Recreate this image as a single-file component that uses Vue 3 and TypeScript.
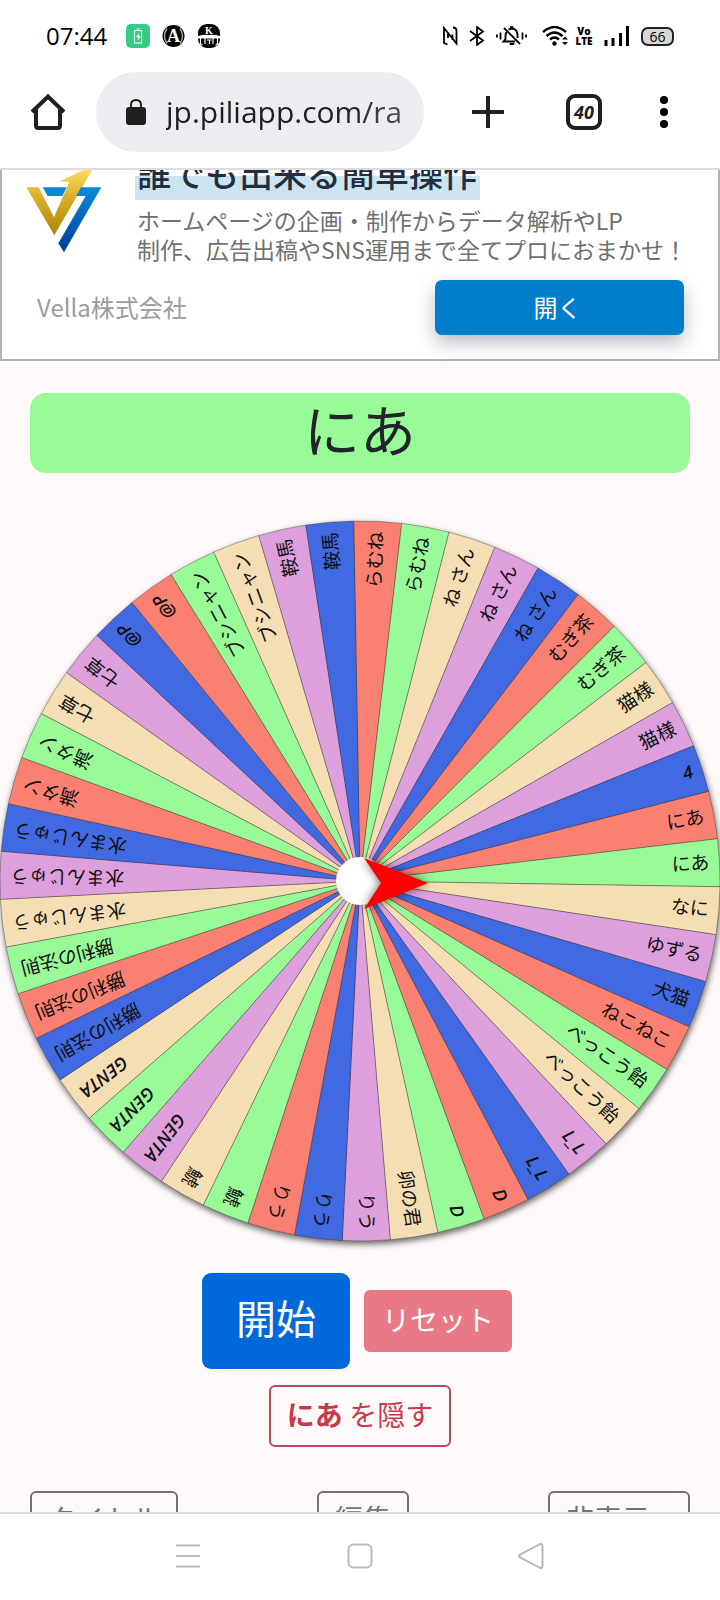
<script setup lang="ts">
import { ref } from 'vue'

interface Entry {
  name: string
  color: string
}

const SALMON = '#fa8072'
const GREEN = '#98fb98'
const WHEAT = '#f5deb3'
const PLUM = '#dda0dd'
const BLUE = '#4169e1'
const PALETTE = [SALMON, GREEN, WHEAT, PLUM, BLUE]

const groups: [string, number][] = [
  ['らむね', 2], ['ね さん', 3], ['むぎ茶', 2], ['猫様', 2], ['4', 1],
  ['にあ', 2], ['なに', 1], ['ゆずる', 1], ['犬猫', 1], ['ねこねこ', 1],
  ['べっこう飴', 2], ['L_L', 2], ['D', 2], ['卵の君', 1], ['りう', 3],
  ['鯱', 2], ['GENTA', 3], ['勝利の法則', 3], ['水まんじゅう', 3],
  ['満タン', 2], ['七草', 2], ['@P', 2], ['ブシニャン', 2], ['鞍馬', 2],
]

const names = groups.flatMap(([name, n]) => Array.from({ length: n }, () => name))

const entries: Entry[] = names.map((name, i) => {
  const slot = i < 29 ? i : i < 31 ? i - 28 : i + 3
  return { name, color: PALETTE[slot % 5] }
})

const START = -1
const STEP = 360 / entries.length
const R = 360

function point(deg: number): string {
  const a = ((deg - 90) * Math.PI) / 180
  return `${(R * Math.cos(a)).toFixed(2)} ${(R * Math.sin(a)).toFixed(2)}`
}

const slices = entries.map((e, i) => {
  const from = START + i * STEP
  return {
    ...e,
    path: `M0 0L${point(from)}A${R} ${R} 0 0 1 ${point(from + STEP)}Z`,
    turn: `rotate(${(from + STEP / 2 - 90).toFixed(3)})`,
    latin: /^[\x20-\x7e]+$/.test(e.name),
  }
})

const winner = ref('にあ')
const address = ref('jp.piliapp.com/ra')
</script>

<template>
  <div class="phone">
    <header class="status">
      <span class="time">07:44</span>
      <svg class="app-a" width="24" height="24" viewBox="0 0 24 24">
        <rect width="24" height="24" rx="5" fill="#35cb84" />
        <path d="M8.500 6.500h7v12.500h-7zM10.500 5h3" fill="none" stroke="#fff" stroke-width="1.100" />
        <path d="M12.800 9l-2.800 4h1.800v3.500l2.700-4.200h-1.700z" fill="#fff" />
      </svg>
      <svg class="app-b" width="23" height="24" viewBox="0 0 23 24">
        <circle cx="11.500" cy="12" r="11" fill="#000" />
        <path d="M5 4.500Q0 12 5 19.500M18 4.500Q23 12 18 19.500" fill="none" stroke="#aaa" stroke-width="1.400" />
        <text x="11.500" y="18" text-anchor="middle" class="glyph-a">A</text>
      </svg>
      <svg class="app-c" width="24" height="24" viewBox="0 0 24 24">
        <rect x="1" width="22" height="24" rx="9" fill="#000" />
        <path d="M0 12.500Q5 10 12 11Q19 10 24 12.500V14.500H0z" fill="#fff" />
        <path d="M3.500 14v5q0 2 2 2M8 14v6M16 14v6M20.500 14v5q0 2-2 2M10 16h4.500M12.500 16v4" fill="none" stroke="#fff" stroke-width="1.200" />
        <text x="12" y="10" text-anchor="middle" class="glyph-k">K</text>
      </svg>
      <span class="spacer"></span>
      <svg class="nfc" width="15" height="20" viewBox="0 0 15 20">
        <path d="M4.500 18.500L1 17V2L13.500 17.500V4.500Q13.500 1.500 10 1.500M5 12V7M9.500 8.500V14" fill="none" stroke="#000" stroke-width="1.800" />
      </svg>
      <svg class="bt" width="16" height="20" viewBox="0 0 16 20">
        <path d="M1 5L14 14.500L8 19V1L14 5.500L1 15" fill="none" stroke="#000" stroke-width="1.800" />
      </svg>
      <svg class="bell" width="32" height="20" viewBox="0 0 32 20">
        <path d="M8 2L24 18M11 5.500Q9.500 7 9.500 10V13L7.500 15.500H19M12.500 3.500Q20.500 .5 21.500 8.500V12M14 1.200h3.500" fill="none" stroke="#000" stroke-width="1.900" />
        <path d="M14 17.500h4v1h-4z" stroke="#000" />
        <path d="M1 8.500v3M4.500 6.500v7M26.500 6.500v7M30 8.500v3" stroke="#000" stroke-width="1.800" />
      </svg>
      <svg class="wifi" width="27" height="20" viewBox="0 0 27 20">
        <path d="M1 6Q12.500-4 24 6M4.500 10Q12.500 3 20.500 10M8 13.500Q12.500 9.500 17 13.500" fill="none" stroke="#000" stroke-width="2.400" />
        <circle cx="12.500" cy="17.500" r="2.200" />
        <path d="M20 13.500l3-3 3 3zM20 16l3 3 3-3z" />
      </svg>
      <span class="volte"><b>Vo</b><b>LTE</b></span>
      <svg class="signal" width="26" height="20" viewBox="0 0 26 20">
        <path d="M2 14v6M9 12v8M16.500 7v13M23.500 0v20" stroke="#000" stroke-width="3" />
      </svg>
      <span class="battery">66</span>
    </header>

    <nav class="toolbar">
      <button class="icon" aria-label="Home">
        <svg width="36" height="36" viewBox="0 0 36 36">
          <path d="M2 18L18 2.500L34 18M6 15.500V31.500Q6 34 8.500 34H27.500Q30 34 30 31.500V15.500" fill="none" stroke="#1f1f1f" stroke-width="4" />
        </svg>
      </button>
      <label class="omnibox">
        <svg width="20" height="26" viewBox="0 0 20 26">
          <rect y="8" width="20" height="18" rx="3" fill="#1f1f1f" />
          <path d="M5 9V6Q5 1 10 1Q15 1 15 6V9" fill="none" stroke="#1f1f1f" stroke-width="2" />
        </svg>
        <input v-model="address" type="text" aria-label="URL" />
      </label>
      <button class="icon plus" aria-label="New tab">
        <svg width="32" height="32" viewBox="0 0 32 32">
          <path d="M16 0V32M0 16H32" stroke="#1f1f1f" stroke-width="4" />
        </svg>
      </button>
      <button class="tabs">40</button>
      <button class="icon" aria-label="Menu">
        <svg width="8" height="32" viewBox="0 0 8 32">
          <circle cx="4" cy="4" r="4" /><circle cx="4" cy="16" r="4" /><circle cx="4" cy="28" r="4" />
        </svg>
      </button>
    </nav>

    <main class="view">
      <section class="ad">
        <div class="ad-top">
          <svg class="logo" width="77" height="83" viewBox="75 30 231 249">
            <defs>
              <linearGradient id="gold" x1="0" y1="0" x2="0" y2="1">
                <stop offset="0" stop-color="#ffdc5c" />
                <stop offset="0.400" stop-color="#d9b02c" />
                <stop offset="1" stop-color="#a88600" />
              </linearGradient>
              <linearGradient id="azure" x1="0" y1="0" x2="0" y2="1">
                <stop offset="0" stop-color="#0b8bdc" />
                <stop offset="1" stop-color="#003c94" />
              </linearGradient>
            </defs>
            <path d="M128 82H200L187 108H143Z" fill="#0b86d4" />
            <path d="M79 82H116L162 172L208 66L180 64L250 30H276L163 226Z" fill="url(#gold)" />
            <path d="M243 82H304L192 277L175 250L257 108H229Z" fill="url(#azure)" />
          </svg>
          <div class="copy">
            <div class="headline"><h2>誰でも出来る簡単操作</h2></div>
            <p>ホームページの企画・制作からデータ解析やLP<br />制作、広告出稿やSNS運用まで全てプロにおまかせ！</p>
          </div>
        </div>
        <div class="ad-bottom">
          <span class="brand">Vella株式会社</span>
          <button class="open">開く</button>
        </div>
      </section>

      <h1 class="result">{{ winner }}</h1>

      <svg class="wheel" viewBox="-360 -360 720 720">
        <g class="disc">
          <path v-for="(s, i) in slices" :key="i" :d="s.path" :fill="s.color" class="slice" />
        </g>
        <text
          v-for="(s, i) in slices"
          :key="'t' + i"
          :transform="s.turn"
          x="350"
          y="6"
          text-anchor="end"
          :class="['name', { latin: s.latin }]"
        >{{ s.name }}</text>
        <circle r="24" fill="#fff" />
        <path d="M4 -23L68 2L4 28L21 2Z" class="pointer" />
      </svg>

      <div class="actions">
        <button class="start">開始</button>
        <button class="reset">リセット</button>
      </div>
      <div class="actions second">
        <button class="hide"><b>{{ winner }}</b> を隠す</button>
      </div>
      <div class="tools">
        <button>タイトル</button>
        <button>編集</button>
        <button>非表示<i class="caret"></i></button>
      </div>
    </main>

    <footer class="sysnav">
      <button class="icon" aria-label="Recents">
        <svg width="26" height="26" viewBox="0 0 26 26"><path d="M1 2.500H25M1 13H25M1 23.500H25" /></svg>
      </button>
      <button class="icon" aria-label="Home screen">
        <svg width="26" height="26" viewBox="0 0 26 26"><rect x="1.500" y="1.500" width="23" height="23" rx="5" /></svg>
      </button>
      <button class="icon" aria-label="Back">
        <svg width="26" height="26" viewBox="0 0 26 26"><path d="M22 1.200L2 11.500Q0 13 2 14.500L22 24.800Q24.500 25.500 24.500 23V3Q24.500 .5 22 1.200Z" /></svg>
      </button>
    </footer>
  </div>
</template>

<style>
body {
  margin: 0;
  background: #fff;
}
</style>

<style scoped>
.phone {
  display: flex;
  flex-direction: column;
  height: 100vh;
  overflow: hidden;
  background: #fff;
  color: #212529;
  font-family: "Noto Sans CJK JP", "Noto Sans", sans-serif;
}
button {
  margin: 0;
  font-family: inherit;
  font-weight: 400;
  cursor: pointer;
}
.icon {
  display: flex;
  padding: 0;
  border: 0;
  background: none;
}
.status {
  flex: none;
  display: flex;
  align-items: center;
  height: 72px;
  padding: 0 46px;
  color: #000;
}
.time {
  width: 80px;
  font: 400 24px/32px "Open Sans", sans-serif;
}
.app-b { margin-left: 12px; }
.app-c { margin-left: 12px; }
.glyph-a {
  font: 700 18px "Liberation Serif", serif;
  fill: #fff;
}
.glyph-k {
  font: 700 10px "Liberation Serif", serif;
  fill: #fff;
}
.spacer { flex: 1; }
.bt { margin-left: 11px; }
.bell { margin-left: 11px; }
.wifi { margin-left: 14px; }
.volte {
  display: flex;
  flex-direction: column;
  align-items: center;
  width: 18px;
  margin-left: 6px;
  font: 700 10px/10px "Open Sans", sans-serif;
}
.signal { margin-left: 11px; }
.battery {
  box-sizing: border-box;
  width: 33px;
  height: 19px;
  margin-left: 11px;
  border: 2px solid #222;
  border-radius: 7px;
  background: #d8d8d8;
  font: 400 14px/15px "Open Sans", sans-serif;
  text-align: center;
}
.toolbar {
  flex: none;
  display: flex;
  align-items: center;
  height: 80px;
  padding: 0 52px 16px 30px;
  border-bottom: 2px solid #dcdcdc;
}
.omnibox {
  flex: 1;
  display: flex;
  align-items: center;
  gap: 20px;
  min-width: 0;
  height: 80px;
  margin: 0 48px 0 30px;
  padding: 0 14px 0 30px;
  border-radius: 40px;
  background: #ecedf1;
}
.omnibox svg { flex: none; }
.omnibox input {
  flex: 1;
  min-width: 0;
  padding: 0;
  border: 0;
  outline: 0;
  background: none;
  color: #1f1f1f;
  font: 500 30px/40px "Open Sans", sans-serif;
  mask-image: linear-gradient(90deg, #000 75%, rgba(0, 0, 0, 0.700));
}
.plus { margin-right: 62px; }
.tabs {
  box-sizing: border-box;
  width: 36px;
  height: 36px;
  margin-right: 58px;
  padding: 0;
  border: 4px solid #1f1f1f;
  border-radius: 9px;
  background: #fff;
  color: #1f1f1f;
  font: italic 700 18px/28px "Open Sans", sans-serif;
}
.view {
  flex: 1;
  min-height: 0;
  overflow: hidden;
  background: #fff9f9;
}
.ad {
  border: 2px solid #b4b4b4;
  border-top: 0;
  background: #fff;
}
.ad-top {
  display: flex;
  align-items: flex-start;
  padding: 0 0 0 23px;
}
.logo { flex: none; }
.copy {
  margin-left: 33px;
  white-space: nowrap;
}
.headline {
  display: flex;
  align-items: flex-end;
  height: 30px;
  overflow: hidden;
}
.headline h2 {
  margin: 0;
  padding: 0 3px 4px 2px;
  background: linear-gradient(#fff 26px, #cce4f0 26px);
  color: #222d3d;
  font-size: 34px;
  font-weight: 500;
  line-height: 46px;
}
.copy p {
  margin: 6px 0 0 2px;
  color: #707070;
  font-size: 23px;
  font-weight: 400;
  line-height: 29px;
}
.ad-bottom {
  display: flex;
  justify-content: space-between;
  align-items: center;
  padding: 16px 34px 24px 35px;
}
.brand {
  padding-bottom: 2px;
  color: #9c9c9c;
  font-size: 24px;
}
.open {
  width: 249px;
  height: 55px;
  padding: 0 4px 2px 0;
  border: 0;
  border-radius: 7px;
  background: #007dcb;
  color: #fff;
  font-size: 24px;
  box-shadow: 0 8px 18px rgba(60, 70, 100, 0.350);
}
.result {
  margin: 32px 30px 48px;
  padding-bottom: 10px;
  border-radius: 16px;
  background: #98fb98;
  font-size: 56px;
  font-weight: 400;
  line-height: 70px;
  text-align: center;
}
.wheel {
  display: block;
  width: 100%;
  overflow: visible;
}
.disc { filter: drop-shadow(1px 3px 3px rgba(0, 0, 0, 0.600)); }
.slice {
  stroke: rgba(40, 40, 40, 0.700);
  stroke-width: 0.500;
}
.name {
  fill: #111;
  font-size: 19px;
}
.latin {
  font-family: "Open Sans", sans-serif;
  font-style: italic;
  font-weight: 600;
  font-size: 18px;
}
.pointer {
  fill: #f00;
  filter: drop-shadow(0 0 5px rgba(0, 0, 0, 0.600));
}
.actions {
  display: flex;
  justify-content: center;
  align-items: center;
  gap: 14px;
  padding: 32px 6px 0 0;
}
.second { padding: 16px 0 0; }
.start {
  height: 96px;
  padding: 0 34px 8px;
  border: 0;
  border-radius: 9px;
  background: #0069d9;
  color: #fff;
  font-size: 40px;
}
.reset,
.hide,
.tools button {
  box-sizing: border-box;
  height: 62px;
  padding: 0 16px 4px;
  border: 2px solid transparent;
  border-radius: 6px;
  font-size: 28px;
}
.reset {
  background: #e87a87;
  color: #fff;
}
.hide {
  border-color: #b94a59;
  background: #fff9f9;
  color: #c9384a;
}
.tools {
  display: flex;
  justify-content: space-between;
  padding: 44px 30px 0;
}
.tools button {
  padding-bottom: 8px;
  border-color: #6f7276;
  background: #fff9f9;
  color: #6f7276;
}
.caret {
  display: inline-block;
  margin-left: 6px;
  border: 8px solid transparent;
  border-top-color: currentColor;
  border-bottom: 0;
}
.sysnav {
  flex: none;
  box-sizing: border-box;
  display: flex;
  justify-content: space-between;
  align-items: center;
  height: 88px;
  padding: 0 176px 2px 175px;
  border-top: 2px solid #dcdcdc;
}
.sysnav svg {
  fill: none;
  stroke: #b9b9b9;
  stroke-width: 2;
}
</style>
